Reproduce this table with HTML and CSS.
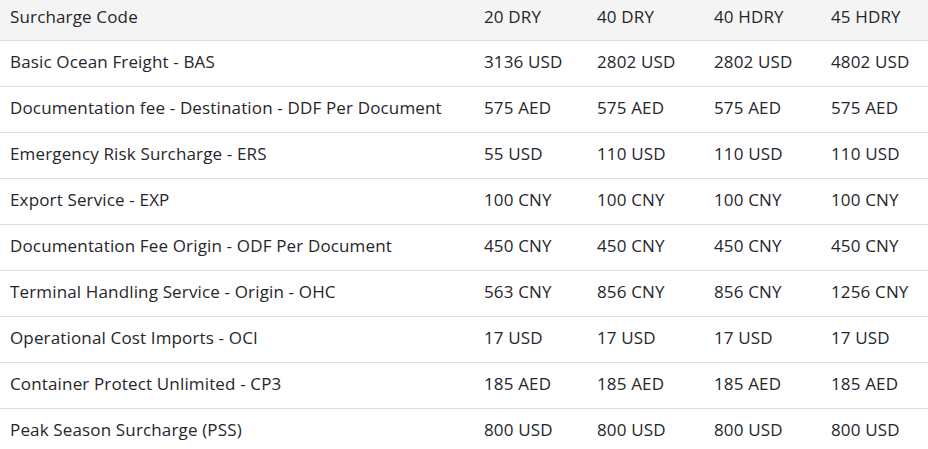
FILE: index.html
```html
<!DOCTYPE html>
<html>
<head>
<meta charset="utf-8">
<link rel="stylesheet" href="styles.css">
</head>
<body>
<table class="rates">
  <colgroup>
    <col class="c-code"><col class="c-a"><col class="c-b"><col class="c-c"><col class="c-d">
  </colgroup>
  <thead>
    <tr><th>Surcharge Code</th><th>20 DRY</th><th>40 DRY</th><th>40 HDRY</th><th>45 HDRY</th></tr>
  </thead>
  <tbody>
    <tr><td>Basic Ocean Freight - BAS</td><td>3136 USD</td><td>2802 USD</td><td>2802 USD</td><td>4802 USD</td></tr>
    <tr><td>Documentation fee - Destination - DDF Per Document</td><td>575 AED</td><td>575 AED</td><td>575 AED</td><td>575 AED</td></tr>
    <tr><td>Emergency Risk Surcharge - ERS</td><td>55 USD</td><td>110 USD</td><td>110 USD</td><td>110 USD</td></tr>
    <tr><td>Export Service - EXP</td><td>100 CNY</td><td>100 CNY</td><td>100 CNY</td><td>100 CNY</td></tr>
    <tr><td>Documentation Fee Origin - ODF Per Document</td><td>450 CNY</td><td>450 CNY</td><td>450 CNY</td><td>450 CNY</td></tr>
    <tr><td>Terminal Handling Service - Origin - OHC</td><td>563 CNY</td><td>856 CNY</td><td>856 CNY</td><td>1256 CNY</td></tr>
    <tr><td>Operational Cost Imports - OCI</td><td>17 USD</td><td>17 USD</td><td>17 USD</td><td>17 USD</td></tr>
    <tr><td>Container Protect Unlimited - CP3</td><td>185 AED</td><td>185 AED</td><td>185 AED</td><td>185 AED</td></tr>
    <tr><td>Peak Season Surcharge (PSS)</td><td>800 USD</td><td>800 USD</td><td>800 USD</td><td>800 USD</td></tr>
  </tbody>
</table>
</body>
</html>
```
FILE: styles.css
```css
html, body {
  margin: 0;
  padding: 0;
  background: #ffffff;
}
body {
  font-family: "Open Sans", "Noto Sans", sans-serif;
  font-size: 17px;
  letter-spacing: 0.15px;
  color: #26262b;
}
.rates {
  border-collapse: collapse;
  width: 928px;
  table-layout: fixed;
}
.c-code { width: 474px; }
.c-a { width: 113px; }
.c-b { width: 117px; }
.c-c { width: 117px; }
.c-d { width: 107px; }
.rates th {
  background: #f4f4f4;
  font-weight: normal;
  text-align: left;
  height: 32px;
  padding: 0 0 8px 10px;
  border-bottom: 1px solid #dddddd;
  vertical-align: middle;
  white-space: nowrap;
}
.rates td {
  height: 41px;
  padding: 0 0 4px 10px;
  border-bottom: 1px solid #dddddd;
  vertical-align: middle;
  white-space: nowrap;
}
.rates tbody tr:last-child td {
  border-bottom: none;
}
```
